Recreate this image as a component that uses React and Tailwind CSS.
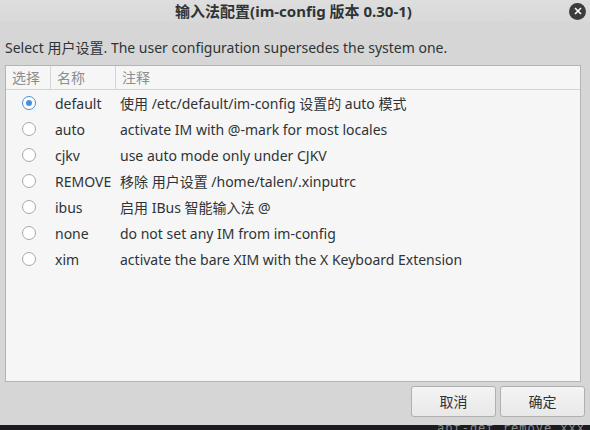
import { useState } from "react";

const rows = [
  { name: "default", note: "使用 /etc/default/im-config 设置的 auto 模式" },
  { name: "auto", note: "activate IM with @-mark for most locales" },
  { name: "cjkv", note: "use auto mode only under CJKV" },
  { name: "REMOVE", note: "移除 用户设置 /home/talen/.xinputrc" },
  { name: "ibus", note: "启用 IBus 智能输入法 @" },
  { name: "none", note: "do not set any IM from im-config" },
  { name: "xim", note: "activate the bare XIM with the X Keyboard Extension" },
];

function Radio({ checked }) {
  return (
    <span className={`w-[14px] h-[14px] rounded-full border flex items-center justify-center ${checked ? "border-[#4a90d9] bg-white" : "border-[#a8a8a8] bg-white"}`}>
      {checked && <span className="w-[6px] h-[6px] rounded-full bg-[#4a90d9]" />}
    </span>
  );
}

export default function App() {
  const [selected, setSelected] = useState("default");

  return (
    <div className="w-[590px] h-[430px] flex flex-col bg-[#d6d6d6] text-[#2e3436] overflow-hidden" style={{ fontFamily: '"Noto Sans", "Noto Sans CJK SC", sans-serif' }}>
      {/* title bar */}
      <div className="h-[22px] flex items-center bg-gradient-to-b from-[#dedede] to-[#d8d8d8]">
        <div className="w-[18px]" />
        <div className="flex-1 flex justify-center text-[15px] leading-[20px] font-bold text-[#2e3436]">输入法配置(im-config 版本 0.30-1)</div>
        <button className="w-[17px] h-[17px] mr-[4px] rounded-full bg-[#3c3c3c] flex items-center justify-center">
          <svg width="8" height="8" viewBox="0 0 8 8"><path d="M1 1L7 7M7 1L1 7" stroke="#fff" strokeWidth="1.6" /></svg>
        </button>
      </div>

      <div className="flex-1 flex flex-col px-[5px] pt-[16px]">
        <div className="text-[14px] leading-[20px] mb-[7px]">Select 用户设置. The user configuration supersedes the system one.</div>

        <div className="h-[317px] w-[576px] bg-[#f6f6f6] border border-[#b4b4b4] flex flex-col">
          <div className="h-[24px] flex items-stretch border-b border-[#d4d4d4] text-[14px] text-[#8a8e8f]">
            <div className="w-[45px] pl-[6px] flex items-center border-r border-[#d4d4d4]">选择</div>
            <div className="w-[65px] pl-[6px] flex items-center border-r border-[#d4d4d4]">名称</div>
            <div className="flex-1 pl-[6px] flex items-center">注释</div>
          </div>
          {rows.map((r) => (
            <div key={r.name} onClick={() => setSelected(r.name)} className="h-[26px] flex items-center text-[14px] text-[#2e3436] cursor-default">
              <div className="w-[45px] flex justify-center pl-[1px]"><Radio checked={selected === r.name} /></div>
              <div className="w-[69px] pl-[4px]">{r.name}</div>
              <div className="flex-1">{r.note}</div>
            </div>
          ))}
        </div>

        <div className="flex justify-end gap-[4px] mt-[4px]">
          <button className="w-[85px] h-[31px] rounded-[3px] border border-[#b0b0b0] bg-gradient-to-b from-[#f4f4f4] to-[#e8e8e8] text-[14px] text-[#2e3436]">取消</button>
          <button className="w-[85px] h-[31px] rounded-[3px] border border-[#b0b0b0] bg-gradient-to-b from-[#f4f4f4] to-[#e8e8e8] text-[14px] text-[#2e3436]">确定</button>
        </div>
      </div>

      {/* terminal strip behind */}
      <div className="h-[5px] bg-[#1c1c20] relative overflow-hidden">
        <span className="absolute left-[437px] top-[-6px] text-[12px] text-[#8a8a8a] tracking-[1px]" style={{ fontFamily: '"DejaVu Sans Mono", monospace' }}>apt-get remove xxx</span>
      </div>
    </div>
  );
}
